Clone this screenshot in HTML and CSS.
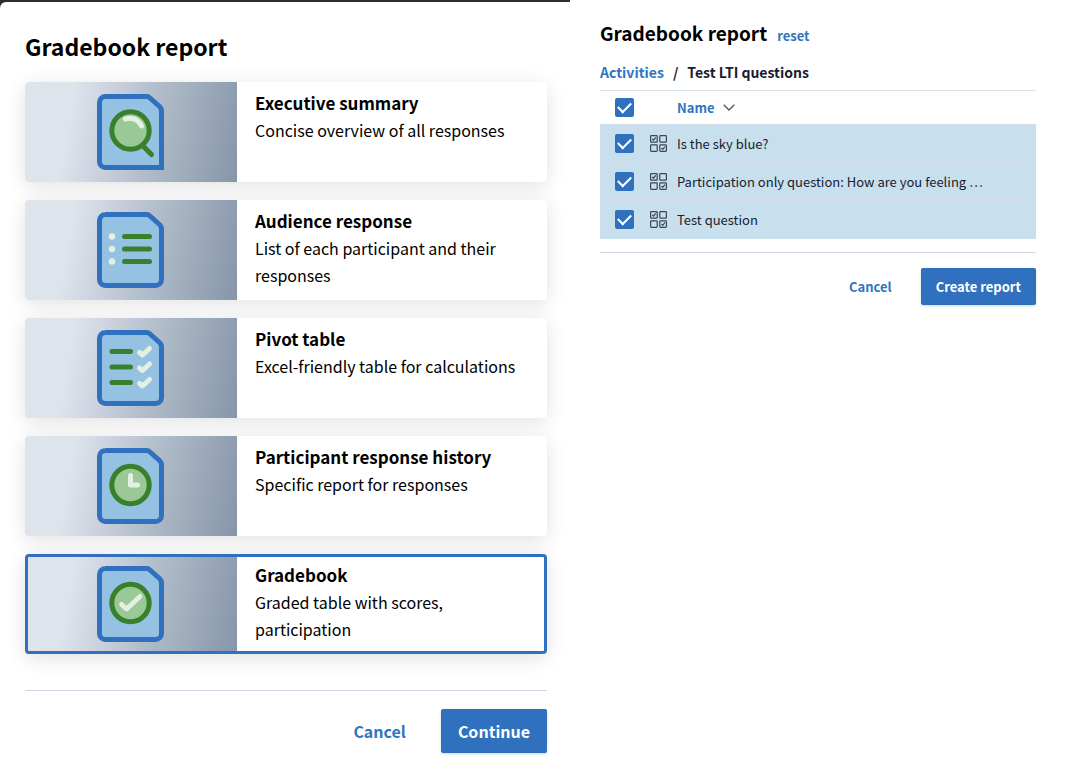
FILE: index.html
```html
<!DOCTYPE html>
<html lang="en">
<head>
<meta charset="utf-8">
<meta name="viewport" content="width=device-width, initial-scale=1">
<title>Gradebook report</title>
<link rel="stylesheet" href="styles.css">
</head>
<body>
<svg class="sprite" aria-hidden="true">
  <symbol id="sheet" viewBox="0 0 67 76">
    <path class="paper" d="M8 2.500H49.500Q51.500 2.500 53 4L62.500 12.500Q64.500 14.500 64.500 17V67.500a6 6 0 0 1-6 6H8.500a6 6 0 0 1-6-6V8.500a6 6 0 0 1 6-6Z"/>
  </symbol>
  <symbol id="quiz" viewBox="0 0 17 17">
    <g fill="none" stroke="#3a4654" stroke-width="1.200">
      <rect x=".6" y=".6" width="6.600" height="6.600" rx=".8"/><rect x="9.800" y=".6" width="6.600" height="6.600" rx=".8"/>
      <rect x=".6" y="9.800" width="6.600" height="6.600" rx=".8"/><rect x="9.800" y="9.800" width="6.600" height="6.600" rx=".8"/>
      <path d="M2.300 4l1.200 1.200L5.800 2.300M11.500 13.200l1.200 1.200L15 11.500"/>
    </g>
  </symbol>
</svg>
<main class="layout">
  <section class="pane">
    <form class="sheet">
      <h1 class="title">Gradebook report</h1>
      <div class="cards">
        <label class="card">
          <input class="card-input" type="radio" name="report">
          <span class="media"><svg class="icon" viewBox="0 0 67 76" aria-hidden="true">
            <path class="paper" d="M8.500 2.500H49.500Q51.500 2.500 53 4L62.500 12.500Q64.500 14.500 64.500 17V73.500H8.500a6 6 0 0 1-6-6V8.500a6 6 0 0 1 6-6Z"/>
            <path class="bar" d="M46 52L54.500 60.500"/><circle class="disc" cx="33.500" cy="36.500" r="18.700"/>
            <path class="mark" d="M28.500 25Q39 22 44.500 32"/></svg></span>
          <span class="text"><strong class="name">Executive summary</strong><span class="desc">Concise overview of all responses</span></span>
        </label>
        <label class="card">
          <input class="card-input" type="radio" name="report">
          <span class="media"><svg class="icon" viewBox="0 0 67 76" aria-hidden="true">
            <use href="#sheet"/>
            <path class="bar" d="M27.500 24.500H52.500M27.500 37H52.500M27.500 49.500H52.500"/>
            <g class="dots"><circle cx="15" cy="24.500" r="3.200"/><circle cx="15" cy="37" r="3.200"/><circle cx="15" cy="49.500" r="3.200"/></g></svg></span>
          <span class="text"><strong class="name">Audience response</strong><span class="desc">List of each participant and their responses</span></span>
        </label>
        <label class="card">
          <input class="card-input" type="radio" name="report">
          <span class="media"><svg class="icon" viewBox="0 0 67 76" aria-hidden="true">
            <use href="#sheet"/>
            <path class="bar" d="M15 21.500H33.500M15 37H33.500M15 52.500H33.500"/>
            <path class="mark" d="M42.500 22.500L45.500 25L52.500 18.500M42.500 38L45.500 40.500L52.500 34M42.500 53.500L45.500 56L52.500 49.500"/></svg></span>
          <span class="text"><strong class="name">Pivot table</strong><span class="desc">Excel-friendly table for calculations</span></span>
        </label>
        <label class="card">
          <input class="card-input" type="radio" name="report">
          <span class="media"><svg class="icon" viewBox="0 0 67 76" aria-hidden="true">
            <use href="#sheet"/>
            <circle class="disc" cx="33.500" cy="37" r="18.700"/><path class="mark" d="M33.500 27.500V37H40.500"/></svg></span>
          <span class="text"><strong class="name">Participant response history</strong><span class="desc">Specific report for responses</span></span>
        </label>
        <label class="card">
          <input class="card-input" type="radio" name="report" checked>
          <span class="media"><svg class="icon" viewBox="0 0 67 76" aria-hidden="true">
            <use href="#sheet"/>
            <circle class="disc" cx="33.500" cy="37" r="18.700"/><path class="mark" d="M24.500 38.500L29.500 43L43 30.500"/></svg></span>
          <span class="text"><strong class="name">Gradebook</strong><span class="desc">Graded table with scores, participation</span></span>
        </label>
      </div>
      <div class="actions">
        <button class="btn" type="button">Cancel</button>
        <button class="btn btn-primary" type="button">Continue</button>
      </div>
    </form>
  </section>
  <section class="picker">
    <div class="heading"><h2 class="subtitle">Gradebook report</h2><a class="link reset" href="#">reset</a></div>
    <nav class="crumbs" aria-label="Breadcrumb"><a class="link" href="#">Activities</a><span>/</span><span>Test LTI questions</span></nav>
    <table class="table">
      <thead>
        <tr><th class="col-check"><input class="check" type="checkbox" aria-label="Select all" checked></th><th class="col-icon"></th>
        <th class="col-name"><button class="sort" type="button">Name <svg class="chevron" viewBox="0 0 12 7" aria-hidden="true"><path d="M.7.700L6 6L11.300.700"/></svg></button></th></tr>
      </thead>
      <tbody>
        <tr><td class="col-check"><input class="check" type="checkbox" id="q1" checked></td><td class="col-icon"><svg class="quiz" aria-hidden="true"><use href="#quiz"/></svg></td><td class="col-name"><label for="q1">Is the sky blue?</label></td></tr>
        <tr><td class="col-check"><input class="check" type="checkbox" id="q2" checked></td><td class="col-icon"><svg class="quiz" aria-hidden="true"><use href="#quiz"/></svg></td><td class="col-name"><label for="q2">Participation only question: How are you feeling …</label></td></tr>
        <tr><td class="col-check"><input class="check" type="checkbox" id="q3" checked></td><td class="col-icon"><svg class="quiz" aria-hidden="true"><use href="#quiz"/></svg></td><td class="col-name"><label for="q3">Test question</label></td></tr>
      </tbody>
    </table>
    <div class="actions actions-small">
      <button class="btn" type="button">Cancel</button>
      <button class="btn btn-primary" type="button">Create report</button>
    </div>
  </section>
</main>
</body>
</html>
```
FILE: styles.css
```css
* { box-sizing: border-box; }
body {
  margin: 0;
  background: #fff;
  color: #000;
  font-family: "Noto Sans CJK SC", "Noto Sans", sans-serif;
}
h1, h2 { margin: 0; font-weight: 700; }
button { font: inherit; }
.sprite { position: absolute; width: 0; height: 0; }
.layout {
  display: grid;
  grid-template-columns: 570fr 516fr;
  min-height: 100vh;
}
.pane { padding-top: 2px; background: #302c31; }
.sheet {
  height: 100%;
  padding: 25px 23px 28px 25px;
  border-top-left-radius: 6px;
  background: #fff;
}
.title { font-size: 23px; line-height: 38px; }
.cards { display: grid; gap: 18px; margin-top: 17px; }
.card {
  position: relative;
  display: flex;
  min-height: 100px;
  border-radius: 4px;
  background: #fff;
  box-shadow: 0 4px 20px rgba(0, 0, 0, 0.12);
  cursor: pointer;
}
.card-input { position: absolute; margin: 0; opacity: 0; }
.card:has(:checked)::after {
  content: "";
  position: absolute;
  inset: 0;
  border: 3px solid #2f70bf;
  border-radius: 4px;
}
.media {
  display: flex;
  flex: 0 0 212px;
  align-items: center;
  justify-content: center;
  padding-right: 1px;
  border-radius: 4px 0 0 4px;
  background: linear-gradient(100deg, #dde4ec 0%, #dde4ec 22%, #c9d0dc 40%, #aebac7 62%, #8695aa 100%);
}
.icon { width: 67px; height: 76px; }
.paper { fill: #95c1e3; stroke: #2f70bf; stroke-width: 5; }
.bar, .mark { fill: none; stroke-linecap: round; stroke-linejoin: round; }
.bar { stroke: #38802c; stroke-width: 5; }
.mark { stroke: #e4f0e2; stroke-width: 5; }
.disc { fill: #9ac896; stroke: #38802c; stroke-width: 5; }
.dots { fill: #e4f0e2; }
.text { display: flex; flex-direction: column; padding: 7px 18px; }
.name { font-size: 17px; line-height: 28px; }
.desc { font-size: 16px; line-height: 27px; }
.actions {
  display: flex;
  justify-content: flex-end;
  gap: 18px;
  margin-top: 36px;
  padding-top: 18px;
  border-top: 1px solid #ccd5e1;
}
.btn {
  height: 44px;
  padding: 0 17px;
  border: 0;
  border-radius: 2px;
  background: none;
  color: #2f76c2;
  font-size: 16px;
  font-weight: 700;
}
.btn-primary {
  background: #2f70bf;
  color: #fff;
  box-shadow: 0 1px 3px rgba(0, 0, 0, 0.16);
}
.picker { padding: 18px 50px 24px 30px; color: #182030; }
.heading { display: flex; align-items: baseline; gap: 10px; color: #000; }
.subtitle { font-size: 19px; line-height: 30px; }
.link { color: #2f76c2; font-weight: 700; text-decoration: none; }
.reset { font-size: 13px; }
.crumbs {
  display: flex;
  gap: 9px;
  margin-top: 12px;
  padding-bottom: 6px;
  font-size: 14px;
  line-height: 24px;
  font-weight: 700;
}
.table {
  width: 100%;
  border-collapse: collapse;
  table-layout: fixed;
  border-top: 1px solid #d9e1ec;
  font-size: 13px;
}
.table th, .table td { padding: 0; text-align: left; vertical-align: middle; }
.table th { height: 34px; }
.table td { height: 38px; border-top: 1px solid #d5deea; background: #c8dfee; }
.table .col-check { width: 50px; padding-left: 15px; }
.col-icon { width: 27px; }
.table .col-name { padding-right: 40px; }
.col-name label {
  display: block;
  overflow: hidden;
  text-overflow: ellipsis;
  white-space: nowrap;
}
.check {
  display: grid;
  place-items: center;
  width: 19px;
  height: 19px;
  margin: 0;
  appearance: none;
  border-radius: 2px;
  background: #2f70bf;
}
.check:checked::before {
  content: "";
  width: 11px;
  height: 6px;
  margin-bottom: 3px;
  border-left: 2px solid #fff;
  border-bottom: 2px solid #fff;
  transform: rotate(-45deg);
}
.quiz { display: block; width: 17px; height: 17px; }
.sort {
  display: flex;
  align-items: center;
  gap: 8px;
  padding: 0;
  border: 0;
  background: none;
  color: #2f76c2;
  font-weight: 700;
}
.chevron { width: 12px; height: 7px; fill: none; stroke: #4b5563; stroke-width: 1.300; }
.actions-small { gap: 14px; margin-top: 13px; padding-top: 15px; }
.actions-small .btn { height: 37px; padding: 0 15px; font-size: 13px; }
```
